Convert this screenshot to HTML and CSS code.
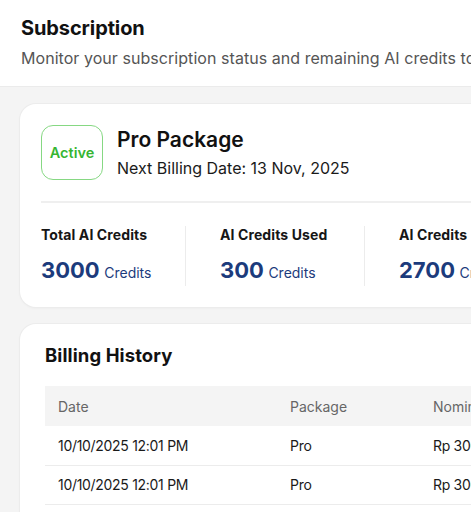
FILE: index.html
```html
<!DOCTYPE html>
<html>
<head>
<meta charset="utf-8">
<link rel="stylesheet" href="styles.css">
</head>
<body>
<div class="page">
  <header class="header">
    <h1 class="title">Subscription</h1>
    <p class="subtitle">Monitor your subscription status and remaining AI credits to stay on top of your usage.</p>
  </header>
  <main class="content">
    <section class="card plan-card">
      <div class="plan">
        <div class="badge">Active</div>
        <div class="plan-info">
          <div class="plan-name">Pro Package</div>
          <div class="plan-date">Next Billing Date: 13 Nov, 2025</div>
        </div>
      </div>
      <div class="stats">
        <div class="stat">
          <div class="stat-label">Total AI Credits</div>
          <div class="stat-value"><span class="num">3000</span> <span class="unit">Credits</span></div>
        </div>
        <div class="stat">
          <div class="stat-label">AI Credits Used</div>
          <div class="stat-value"><span class="num">300</span> <span class="unit">Credits</span></div>
        </div>
        <div class="stat">
          <div class="stat-label">AI Credits Remaining</div>
          <div class="stat-value"><span class="num">2700</span> <span class="unit">Credits</span></div>
        </div>
      </div>
    </section>
    <section class="card billing-card">
      <h2 class="section-title">Billing History</h2>
      <table class="table">
        <thead>
          <tr><th class="c-date">Date</th><th class="c-pkg">Package</th><th class="c-nom">Nominal</th><th>Status</th></tr>
        </thead>
        <tbody>
          <tr><td>10/10/2025 12:01 PM</td><td>Pro</td><td>Rp 300.000</td><td>Paid</td></tr>
          <tr><td>10/10/2025 12:01 PM</td><td>Pro</td><td>Rp 300.000</td><td>Paid</td></tr>
          <tr><td>10/10/2025 12:01 PM</td><td>Pro</td><td>Rp 300.000</td><td>Paid</td></tr>
        </tbody>
      </table>
    </section>
  </main>
</div>
</body>
</html>
```
FILE: styles.css
```css
* { box-sizing: border-box; }
html, body { margin: 0; padding: 0; }
body {
  width: 471px;
  height: 512px;
  overflow: hidden;
  background: #f4f4f4;
  font-family: Inter, "Liberation Sans", sans-serif;
  color: #111;
}
.page { width: 760px; }
.header {
  background: #fff;
  padding: 16px 21px 0;
  height: 87px;
  border-bottom: 1px solid #ebebeb;
}
.title {
  margin: 0;
  font-size: 20px;
  font-weight: 700;
  line-height: 24px;
  letter-spacing: -0.1px;
}
.subtitle {
  margin: 8px 0 0;
  font-size: 16px;
  line-height: 20px;
  color: #555;
  white-space: nowrap;
  letter-spacing: 0.05px;
}
.content {
  padding: 17px 0 0 20px;
  display: flex;
  flex-direction: column;
  gap: 17px;
}
.card {
  background: #fff;
  border-radius: 16px;
  box-shadow: 0 0 0 1px #ececec, 0 1px 3px rgba(0,0,0,0.05);
}
.plan-card { padding: 21px 21px 24px; height: 203px; }
.plan {
  display: flex;
  align-items: center;
  gap: 14px;
  padding-bottom: 21px;
  border-bottom: 2px solid #efefef;
}
.badge {
  width: 62px;
  height: 55px;
  border: 1.5px solid #86d883;
  border-radius: 12px;
  color: #36b532;
  font-weight: 600;
  font-size: 14.5px;
  display: flex;
  align-items: center;
  justify-content: center;
}
.plan-name {
  font-size: 21px;
  font-weight: 600;
  line-height: 25px;
  margin-top: -1px;
}
.plan-date {
  font-size: 16px;
  line-height: 20px;
  margin-top: 6px;
  color: #1a1a1a;
}
.stats {
  display: flex;
  padding-top: 23px;
}
.stat {
  width: 145px;
  margin-right: 34px;
  border-right: 1px solid #ececec;
  flex: none;
}
.stat:last-child { border-right: none; width: 200px; }
.stat-label {
  font-size: 14px;
  font-weight: 700;
  line-height: 17px;
  color: #161616;
  letter-spacing: 0.1px;
}
.stat-value {
  margin-top: 14px;
  color: #1c3b7c;
  line-height: 26px;
  white-space: nowrap;
}
.num { font-size: 22px; font-weight: 700; letter-spacing: 0; }
.unit { font-size: 14px; }
.billing-card { padding: 20px 25px 10px; height: 220px; }
.section-title {
  margin: 0;
  font-size: 18.5px;
  font-weight: 700;
  line-height: 22px;
  letter-spacing: 0.1px;
}
.table {
  margin-top: 20px;
  border-collapse: collapse;
  width: 620px;
  font-size: 14px;
}
.table th {
  background: #f4f4f4;
  color: #666;
  font-weight: 400;
  text-align: left;
  height: 40px;
  padding: 0 13px;
}
.table td {
  height: 39px;
  padding: 0 13px;
  border-bottom: 1px solid #ececec;
  color: #1a1a1a;
  letter-spacing: -0.3px;
}
.c-date { width: 232px; }
.c-pkg { width: 143px; }
```
